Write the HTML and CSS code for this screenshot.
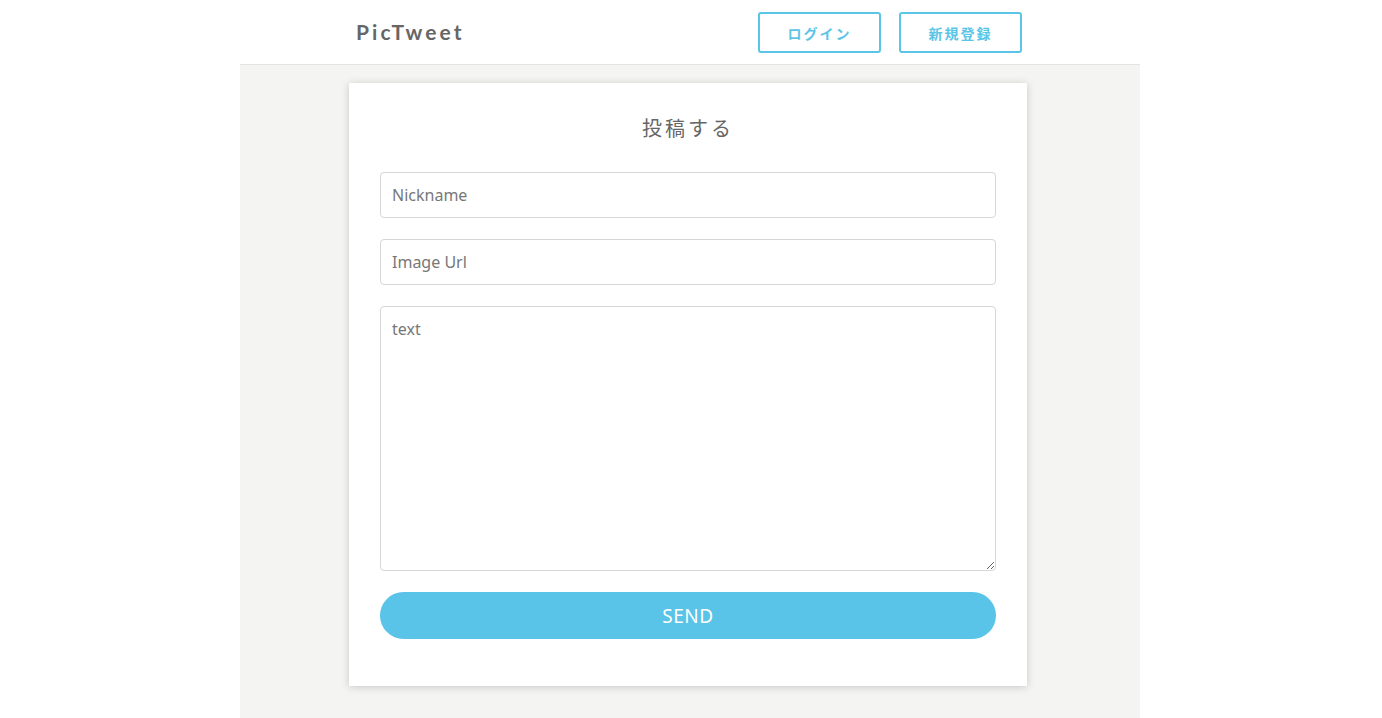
FILE: index.html
```html
<!DOCTYPE html>
<html lang="ja">
<head>
<meta charset="utf-8">
<title>PicTweet</title>
<link rel="stylesheet" href="styles.css">
</head>
<body>
<div class="wrapper">
  <header class="header">
    <div class="header-inner">
      <a class="logo" href="#">PicTweet</a>
      <nav class="nav">
        <a class="nav-btn" href="#">ログイン</a>
        <a class="nav-btn" href="#">新規登録</a>
      </nav>
    </div>
  </header>
  <main class="main">
    <form class="card">
      <h3 class="card-title">投稿する</h3>
      <input class="field" type="text" placeholder="Nickname">
      <input class="field" type="text" placeholder="Image Url">
      <textarea class="field area" placeholder="text"></textarea>
      <button class="send" type="button">SEND</button>
    </form>
  </main>
</div>
</body>
</html>
```

FILE: styles.css
```css
* { box-sizing: border-box; }
html, body { margin: 0; padding: 0; background: #fff; }
body {
  font-family: "Noto Sans", "Noto Sans CJK JP", sans-serif;
  color: #666;
}
.wrapper {
  width: 900px;
  margin-left: 240px;
  min-height: 718px;
  background: #f4f4f2;
  display: flex;
  flex-direction: column;
}
.header {
  background: #fff;
  height: 65px;
  border-bottom: 1px solid #e3e3e3;
}
.header-inner {
  height: 64px;
  padding: 0 118px 0 116px;
  display: flex;
  align-items: center;
  justify-content: space-between;
}
.logo {
  font-family: "Lato", sans-serif;
  font-weight: 700;
  font-size: 21px;
  letter-spacing: 3.1px;
  color: #666;
  text-decoration: none;
  margin-top: -1px;
}
.nav { display: flex; gap: 18px; margin-top: 1px; }
.nav-btn {
  display: flex;
  align-items: center;
  justify-content: center;
  width: 123px;
  height: 41px;
  border: 2px solid #5bc5e8;
  border-radius: 3px;
  color: #5bc5e8;
  font-family: "Noto Sans CJK JP", sans-serif;
  font-weight: 700;
  font-size: 14px;
  letter-spacing: 2px;
  text-decoration: none;
}
.main { flex: 1; }
.card {
  width: 678px;
  margin: 18px 0 0 109px;
  background: #fff;
  box-shadow: 0 1px 8px rgba(0,0,0,0.18);
  padding: 30px 31px 47px;
  display: flex;
  flex-direction: column;
  gap: 21px;
}
.card-title {
  margin: 0 0 8px;
  text-align: center;
  font-family: "Noto Sans CJK JP", sans-serif;
  font-weight: 400;
  font-size: 20px;
  line-height: 30px;
  letter-spacing: 3px;
  color: #666;
}
.field {
  width: 100%;
  height: 46px;
  border: 1px solid #d6d6d6;
  border-radius: 4px;
  padding: 0 11px;
  font-family: "Noto Sans", sans-serif;
  font-size: 16px;
  color: #333;
  background: #fff;
  outline: none;
}
.field::placeholder { color: #777; }
.area {
  height: 265px;
  padding: 11px;
  line-height: 22px;
  resize: vertical;
}
.send {
  height: 47px;
  border: none;
  border-radius: 24px;
  background: #59c3e8;
  color: #fff;
  font-family: "Noto Sans", sans-serif;
  font-size: 19px;
  letter-spacing: 0.5px;
  cursor: pointer;
}
```
